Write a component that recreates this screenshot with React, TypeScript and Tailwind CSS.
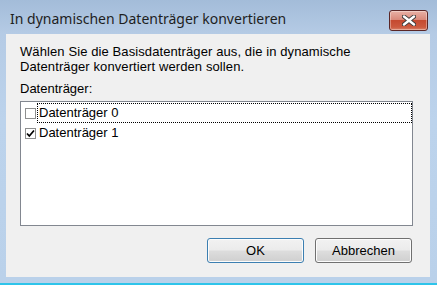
import React from "react";

const ui = { fontFamily: '"Liberation Sans", Arial, sans-serif' };
const title = { fontFamily: '"Noto Sans", "Open Sans", sans-serif' };

const disks = [
  { label: "Datenträger 0", checked: false, focused: true },
  { label: "Datenträger 1", checked: true, focused: false },
];

function CloseButton() {
  return (
    <div className="flex h-[21px] w-[39px] items-center justify-center rounded-[3px] border border-[#5a2626] bg-[linear-gradient(to_bottom,#e8b1a6_0%,#d98a7b_45%,#c54a30_50%,#cc5a3f_85%,#d9826a_100%)] shadow-[inset_0_0_0_1px_rgba(255,255,255,0.35)]">
      <svg width="14" height="11" viewBox="0 0 14 11">
        <path d="M2 1.5 L12 9.5 M12 1.5 L2 9.5" stroke="#3a3a3a" strokeWidth="4.2" strokeLinecap="round" />
        <path d="M2 1.5 L12 9.5 M12 1.5 L2 9.5" stroke="#ffffff" strokeWidth="2.4" strokeLinecap="round" />
      </svg>
    </div>
  );
}

function Checkbox({ checked }: { checked: boolean }) {
  return (
    <span className="flex h-[11px] w-[11px] shrink-0 items-center justify-center border border-[#8e8f8f] bg-white">
      {checked && (
        <svg width="9" height="9" viewBox="0 0 9 9">
          <path d="M1 4.5 L3.3 7 L8 1.5" fill="none" stroke="#000" strokeWidth="1.7" />
        </svg>
      )}
    </span>
  );
}

function WinButton({ children, isDefault }: { children: React.ReactNode; isDefault?: boolean }) {
  return (
    <button
      className={
        "flex h-[25px] w-[97px] items-center justify-center rounded-[3px] border text-[13px] text-black bg-[linear-gradient(to_bottom,#f2f2f2_0%,#ebebeb_48%,#dddddd_52%,#cfcfcf_100%)] shadow-[inset_0_0_0_1px_#fcfcfc] " +
        (isDefault ? "border-[#3c7fb1]" : "border-[#707070]")
      }
      style={ui}
    >
      {children}
    </button>
  );
}

export default function App() {
  return (
    <div className="flex h-[285px] w-[437px] flex-col bg-[linear-gradient(to_bottom,#a3bcd9_0px,#b5cbe5_34px,#bcd3ec_120px,#bad1ea_285px)]">
      <div className="flex h-[34px] items-start justify-between pl-[10px] pr-[9px]">
        <span className="mt-[10px] text-[14px] leading-[18px] text-[#1e1e1e]" style={title}>
          In dynamischen Datenträger konvertieren
        </span>
        <div className="mt-[10px]">
          <CloseButton />
        </div>
      </div>
      <div className="ml-[6px] mr-[7px] flex h-[243px] flex-col bg-[#f0f0f0] pl-[14px] pr-[17px] pt-[10px]" style={ui}>
        <p className="text-[13px] leading-[15px] tracking-[0.1px] text-black">
          Wählen Sie die Basisdatenträger aus, die in dynamische
          <br />
          Datenträger konvertiert werden sollen.
        </p>
        <p className="mt-[7px] text-[13px] leading-[15px] text-black">Datenträger:</p>
        <div className="mt-[5px] h-[125px] border border-[#828790] bg-white pt-px">
          {disks.map((d) => (
            <div key={d.label} className="flex h-[20px] items-center pl-px">
              <span className="flex w-[16px] justify-center">
                <Checkbox checked={d.checked} />
              </span>
              <span
                className={
                  "ml-[-1px] flex h-[20px] flex-1 items-center pl-px text-[13px] text-black " +
                  (d.focused ? "border border-dotted border-black" : "border border-transparent")
                }
              >
                {d.label}
              </span>
            </div>
          ))}
        </div>
        <div className="mt-[12px] flex justify-end gap-[11px] pr-px">
          <WinButton isDefault>OK</WinButton>
          <WinButton>Abbrechen</WinButton>
        </div>
      </div>
      <div className="flex-1" />
      <div className="h-[2px] bg-[#2ec4ea]" />
    </div>
  );
}
